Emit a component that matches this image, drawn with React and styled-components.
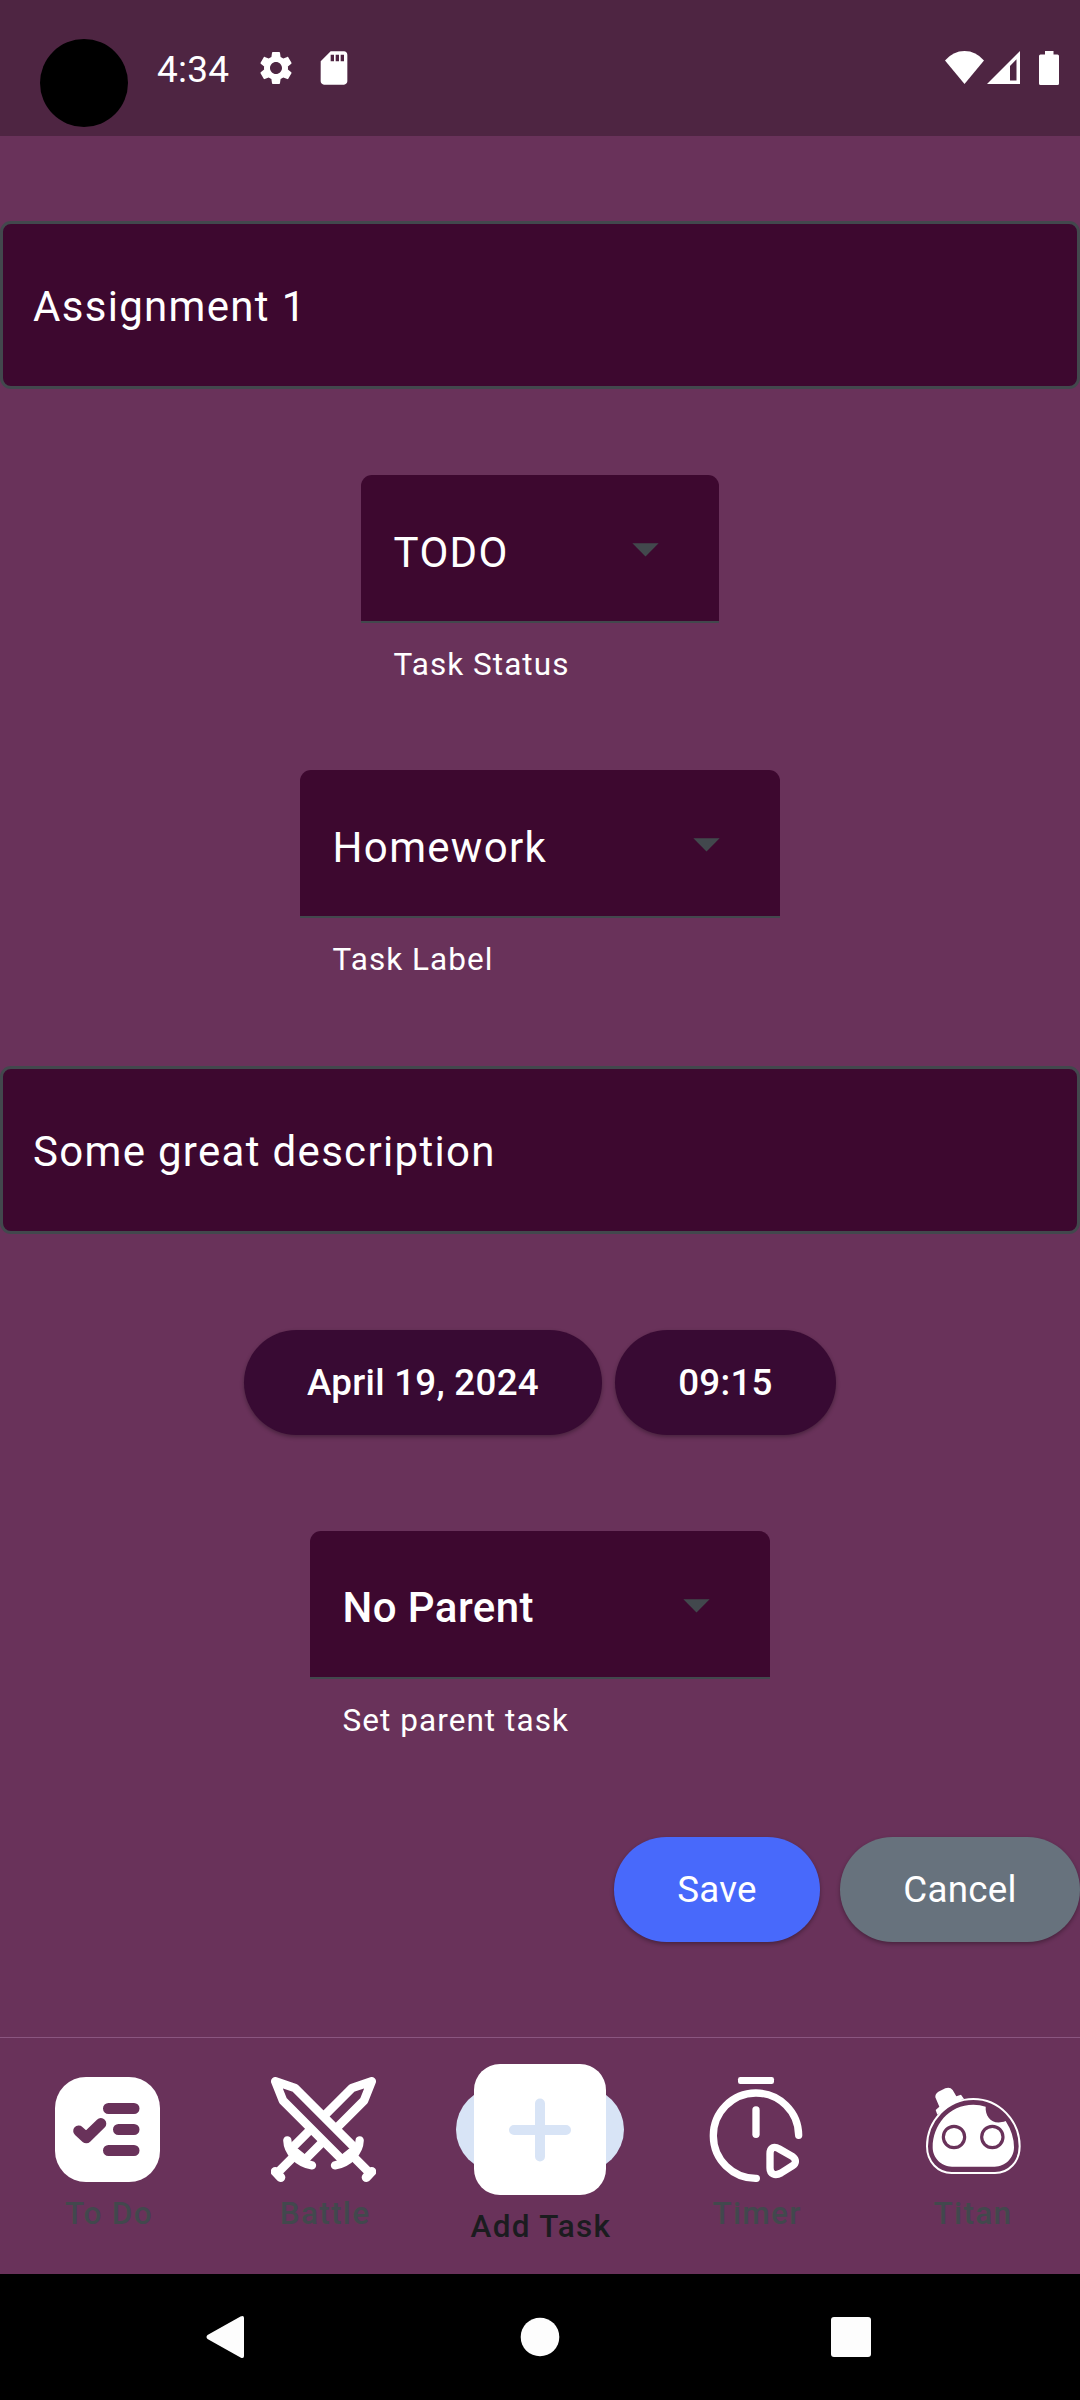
import React from "react";
import styled, { createGlobalStyle } from "styled-components";

const PLUM = "#69325a";
const WINE = "#3d082f";
const SLATE = "#42484d";

const GlobalStyle = createGlobalStyle`
  *, *::before, *::after { box-sizing: border-box; }
  body { margin: 0; background: ${PLUM}; }
  button { border: 0; font: inherit; }
`;

const Screen = styled.div`
  width: 1080px;
  height: 2400px;
  display: flex;
  flex-direction: column;
  background: ${PLUM};
  color: #fff;
  font-family: Roboto, "Liberation Sans", sans-serif;
  overflow: hidden;
`;

const StatusBar = styled.header`
  height: 136px;
  flex: none;
  display: flex;
  align-items: flex-start;
  padding: 39px 21px 0 40px;
  background: #4e2542;
`;

const Camera = styled.div`
  width: 88px;
  height: 88px;
  border-radius: 50%;
  background: #000;
`;

const Clock = styled.span`
  width: 71px;
  margin: 9px 0 0 29px;
  font-size: 37px;
  line-height: 44px;
  letter-spacing: 0.2px;
  white-space: nowrap;
`;

const StatusIcon = styled.svg`
  flex: none;
  width: ${(p) => p.$w}px;
  height: ${(p) => p.$h || p.$w}px;
  margin-top: ${(p) => p.$top}px;
  margin-left: ${(p) => p.$left || 0}px;
  fill: #fff;
`;

const Spacer = styled.div`
  flex: 1;
`;

const Form = styled.main`
  flex: none;
  height: 1901px;
  padding-top: 85px;
  display: flex;
  flex-direction: column;
  align-items: center;
`;

const TextField = styled.div`
  width: 1080px;
  height: 168px;
  flex: none;
  display: flex;
  align-items: center;
  padding: 2px 30px 0;
  margin-bottom: ${(p) => p.$gap}px;
  border: 3px solid ${SLATE};
  border-radius: 11px;
  background: ${WINE};
  font-size: 42px;
  line-height: 63px;
  letter-spacing: 1.3125px;
`;

const Select = styled.div`
  width: ${(p) => p.$width}px;
  height: 210px;
  flex: none;
  margin-bottom: ${(p) => p.$gap}px;
`;

const SelectBox = styled.div`
  height: 148px;
  display: flex;
  align-items: center;
  justify-content: space-between;
  padding: 0 42px 0 32.6px;
  border-bottom: 2px solid ${SLATE};
  border-radius: 11px 11px 0 0;
  background: ${WINE};
`;

const SelectValue = styled.span`
  padding-top: ${(p) => (p.$strong ? 6 : 8)}px;
  font-size: 42px;
  line-height: 63px;
  font-weight: ${(p) => (p.$strong ? 500 : 400)};
  letter-spacing: ${(p) => (p.$strong ? 0.4 : 1.3125)}px;
`;

const Caret = styled.svg`
  width: 63px;
  height: 63px;
  fill: ${SLATE};
`;

const Helper = styled.div`
  padding: 21px 0 0 32.6px;
  font-size: 31.5px;
  line-height: 42px;
  letter-spacing: 1.05px;
`;

const ButtonRow = styled.div`
  width: 100%;
  flex: none;
  display: flex;
  justify-content: ${(p) => p.$align};
  gap: ${(p) => p.$space}px;
  margin-bottom: 96px;
`;

const tones = { date: "#380a33", save: "#4869fb", cancel: "#67727d" };

const Pill = styled.button`
  width: ${(p) => p.$width}px;
  height: 105px;
  padding: 0;
  border-radius: 53px;
  background: ${(p) => tones[p.$tone]};
  color: #fff;
  font-size: 36.75px;
  font-weight: ${(p) => (p.$tone === "date" ? 500 : 400)};
  letter-spacing: 0.2625px;
  box-shadow: 0 2px 4px rgba(0, 0, 0, 0.32);
`;

const TabBar = styled.nav`
  height: 237px;
  flex: none;
  display: grid;
  grid-template-columns: repeat(5, 216px);
  border-top: 1px solid #8a5680;
`;

const Tab = styled.div`
  display: flex;
  flex-direction: column;
  align-items: center;
  padding-top: ${(p) => (p.$active ? 26 : 39)}px;
  color: ${(p) => (p.$active ? "#1b1c1f" : SLATE)};
`;

const TabIcon = styled.svg`
  width: ${(p) => p.$w}px;
  height: ${(p) => p.$h}px;
  margin-right: ${(p) => p.$w % 2}px;
`;

const TabLabel = styled.span`
  padding: 11px 0 0 2px;
  font-size: 31.5px;
  font-weight: 500;
  line-height: 42px;
  letter-spacing: 1.3125px;
`;

const SystemBar = styled.footer`
  height: 126px;
  flex: none;
  display: grid;
  grid-template-columns: repeat(3, 1fr);
  align-items: center;
  justify-items: center;
  padding: 0 69px;
  background: #000;
`;

const SystemIcon = styled.svg`
  width: 60px;
  height: 60px;
  fill: #fdfdfd;
`;

function Dropdown({ width, value, helper, strong, gap }) {
  return (
    <Select $width={width} $gap={gap}>
      <SelectBox>
        <SelectValue $strong={strong}>{value}</SelectValue>
        <Caret viewBox="0 0 24 24">
          <path d="M7 10l5 5 5-5z" />
        </Caret>
      </SelectBox>
      <Helper>{helper}</Helper>
    </Select>
  );
}

const TodoIcon = () => (
  <TabIcon $w={105} $h={105} viewBox="0 0 105 105">
    <rect width="105" height="105" rx="31" fill="#fff" />
    <g stroke={PLUM} strokeWidth="11" strokeLinecap="round" strokeLinejoin="round" fill="none">
      <path d="M53.5 31.5H79M63.5 52.5H79M53.5 73.5H79" />
      <path d="M23.7 54L31.3 60.8L45.8 46.6" />
    </g>
  </TabIcon>
);

const Sword = () => (
  <g stroke="#fff" strokeLinecap="round" strokeLinejoin="round">
    <path d="M826 184L885 204L1060 379L1062 394L1036 420L1024 417L849 242Z" fill={PLUM} strokeWidth="26" />
    <path d="M1048 388L1070 412L1038 428L1020 410Z" fill="#fff" strokeWidth="4" />
    <path d="M1079 361Q1078 388 1058 408Q1036 431 1005 436" fill="none" strokeWidth="25" />
    <path d="M1060 410L1105 455" fill="none" strokeWidth="26" strokeLinecap="butt" />
    <path d="M1115 455L1099 472" fill="none" strokeWidth="28" />
  </g>
);

const BattleIcon = () => (
  <TabIcon $w={105} $h={105} viewBox="813 171 315 315">
    <g transform="translate(1941 0) scale(-1 1)">
      <Sword />
    </g>
    <Sword />
  </TabIcon>
);

const AddIcon = () => (
  <TabIcon $w={168} $h={131} viewBox="0 0 168 131">
    <rect y="23.5" width="168" height="84" rx="42" fill="#d8e4f6" />
    <rect x="18" width="132" height="131" rx="26" fill="#fff" />
    <path d="M58 66H110M84 39.500V92.500" stroke="#d8e4f6" strokeWidth="10" strokeLinecap="round" />
  </TabIcon>
);

const TimerIcon = () => (
  <TabIcon $w={105} $h={105} viewBox="69 171 315 315">
    <rect x="174" y="171" width="108" height="21" rx="7" fill="#fff" />
    <g stroke="#fff" strokeWidth="22" strokeLinecap="round" strokeLinejoin="round" fill="none">
      <path d="M356 346A128 128 0 1 0 229 475" />
      <path d="M228 270V343" />
      <path d="M270 402C270 382 282 378 298 387L338 410C349 418 349 430 338 437L303 459C285 469 270 462 270 444Z" />
    </g>
  </TabIcon>
);

const TitanIcon = () => (
  <TabIcon $w={105} $h={105} viewBox="717 171 315 315">
    <path
      d="M741 379C741 303 802 237 880 237S1019 303 1019 379C1019 426 986 459 945 459H815C774 459 741 426 741 379Z"
      fill="none"
      stroke="#fff"
      strokeWidth="6"
    />
    <path
      d="M758 382C758 316 806 254 880 254Q900 254 917 260C915 291 938 318 977 303Q1002 342 1002 382C1002 414 976 440 944 440H816C784 440 758 414 758 382Z"
      fill="#fff"
    />
    <g fill="#fff" stroke={PLUM} strokeWidth="9.500">
      <circle cx="822" cy="351" r="32" />
      <circle cx="937" cy="351" r="32" />
    </g>
    <path
      d="M766 232Q765 222 775 215L796 205Q810 200 818 210L829 229L843 224L852 237Q820 246 802 263L772 284L767 270L778 260Z"
      fill="#fff"
    />
  </TabIcon>
);

const tabs = [
  { label: "To Do", Icon: TodoIcon },
  { label: "Battle", Icon: BattleIcon },
  { label: "Add Task", Icon: AddIcon, active: true },
  { label: "Timer", Icon: TimerIcon },
  { label: "Titan", Icon: TitanIcon },
];

export default function App() {
  return (
    <>
      <GlobalStyle />
      <Screen>
        <StatusBar>
          <Camera />
          <Clock>4:34</Clock>
          <StatusIcon $w={40} $top={9} $left={28} viewBox="0 0 24 24">
            <path d="M19.14 12.94c.04-.3.06-.61.06-.94 0-.32-.02-.64-.07-.94l2.03-1.580c.18-.14.23-.41.12-.61l-1.920-3.320c-.12-.22-.37-.29-.59-.22l-2.390.960c-.5-.38-1.030-.7-1.620-.94L14.400 2.810c-.04-.24-.24-.41-.48-.41h-3.840c-.24 0-.43.17-.47.410L9.250 5.350c-.59.240-1.130.570-1.620.940L5.240 5.330c-.22-.08-.47 0-.59.220L2.740 8.870c-.12.210-.08.470.120.610l2.030 1.580c-.05.300-.09.630-.09.940s.020.640.070.940l-2.030 1.580c-.18.140-.23.410-.12.610l1.920 3.320c.120.220.370.290.590.220l2.390-.96c.500.380 1.030.700 1.620.940l.360 2.540c.050.240.240.410.480.410h3.840c.240 0 .440-.17.470-.41l.360-2.540c.590-.24 1.130-.56 1.620-.94l2.390.960c.220.080.470 0 .590-.22l1.920-3.320c.120-.22.070-.47-.12-.61l-2.010-1.580zM12 15.600c-1.980 0-3.600-1.620-3.600-3.600s1.620-3.600 3.600-3.600 3.600 1.620 3.600 3.600-1.620 3.600-3.600 3.600z" />
          </StatusIcon>
          <StatusIcon $w={40} $top={9} $left={18} viewBox="0 0 24 24">
            <path d="M18 2h-8L4.020 8 4 20c0 1.100.9 2 2 2h12c1.100 0 2-.9 2-2V4c0-1.100-.9-2-2-2zm-6 6h-2V4h2v4zm3 0h-2V4h2v4zm3 0h-2V4h2v4z" />
          </StatusIcon>
          <Spacer />
          <StatusIcon $w={39} $h={33} $top={12} viewBox="0 0 39 33">
            <path d="M0 9.500Q8 0 19.500 0T39 9.500L19.500 33Z" />
          </StatusIcon>
          <StatusIcon $w={33} $h={33} $top={12} $left={3} viewBox="0 0 33 33">
            <path fillRule="evenodd" d="M0 33L33 0V33ZM23 15V29.500H29.500V8.200Z" />
          </StatusIcon>
          <StatusIcon $w={20} $h={34} $top={12} $left={19} viewBox="0 0 20 34">
            <path d="M6 0h8.500v3.500H18.500Q20 3.500 20 5V32.500Q20 34 18.500 34H1.500Q0 34 0 32.500V5Q0 3.500 1.500 3.500H6Z" />
          </StatusIcon>
        </StatusBar>

        <Form>
          <TextField $gap={86}>Assignment 1</TextField>
          <Dropdown width={358} value="TODO" helper="Task Status" gap={85} />
          <Dropdown width={480} value="Homework" helper="Task Label" gap={86} />
          <TextField $gap={96}>Some great description</TextField>
          <ButtonRow $align="center" $space={13}>
            <Pill $width={358} $tone="date">April 19, 2024</Pill>
            <Pill $width={221} $tone="date">09:15</Pill>
          </ButtonRow>
          <Dropdown width={460} value="No Parent" helper="Set parent task" strong gap={96} />
          <ButtonRow $align="flex-end" $space={20}>
            <Pill $width={206} $tone="save">Save</Pill>
            <Pill $width={240} $tone="cancel">Cancel</Pill>
          </ButtonRow>
        </Form>

        <TabBar>
          {tabs.map(({ label, Icon, active }) => (
            <Tab key={label} $active={active}>
              <Icon />
              <TabLabel>{label}</TabLabel>
            </Tab>
          ))}
        </TabBar>

        <SystemBar>
          <SystemIcon viewBox="0 0 60 60">
            <path d="M11.500 28L44.500 9.500Q48 8 48 11V49Q48 52 44.500 50.500L11.500 32Q9.500 30 11.500 28Z" />
          </SystemIcon>
          <SystemIcon viewBox="0 0 60 60">
            <circle cx="30" cy="30" r="19.300" />
          </SystemIcon>
          <SystemIcon viewBox="0 0 60 60">
            <rect x="7" y="10" width="40" height="40" rx="3" />
          </SystemIcon>
        </SystemBar>
      </Screen>
    </>
  );
}
